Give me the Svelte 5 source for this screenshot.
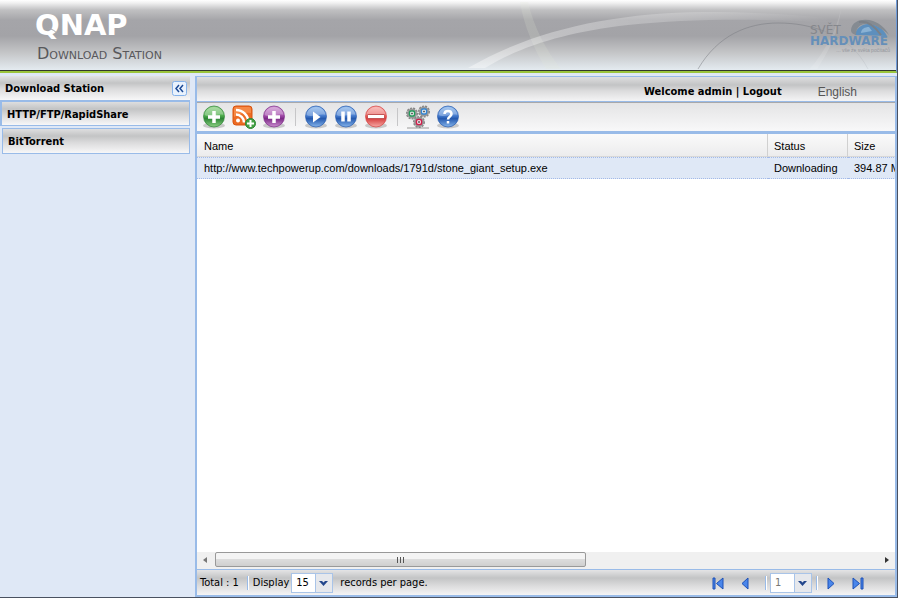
<script>
  let pageSize = $state('15');
  let page = $state('1');
  const groups = [
    { name: 'HTTP/FTP/RapidShare', active: true },
    { name: 'BitTorrent', active: false }
  ];
  const rows = [
    { name: 'http://www.techpowerup.com/downloads/1791d/stone_giant_setup.exe', status: 'Downloading', size: '394.87 MB' }
  ];
</script>

{#snippet ball(id, light, mid, dark)}
  <defs>
    <linearGradient id={id} x1="0" y1="0" x2="0" y2="1">
      <stop offset="0" stop-color={light} />
      <stop offset="0.45" stop-color={mid} />
      <stop offset="0.6" stop-color={dark} />
      <stop offset="1" stop-color={light} />
    </linearGradient>
  </defs>
  <ellipse cx="12" cy="20.500" rx="11" ry="3" fill="#777" opacity="0.35" />
  <circle cx="12" cy="11.500" r="10.500" fill="url(#{id})" stroke={dark} stroke-opacity="0.7" />
  <path d="M2.500 10C3 5 7 2 12 2S21 5 21.500 10C16 8 8 13 2.500 10Z" fill="#fff" opacity="0.3" />
{/snippet}

{#snippet chevron()}
  <svg class="chevron" width="17" height="18" viewBox="0 0 17 18" aria-hidden="true">
    <rect width="17" height="18" fill="#e6e8ec" />
    <path d="M.5 0V18" stroke="#a9c4e8" />
    <path d="M4 7H7L8.500 8.500L10 7H13L8.500 12Z" fill="#24478c" />
  </svg>
{/snippet}

<div class="app">
  <header>
    <svg class="swoosh" viewBox="0 0 448 70" preserveAspectRatio="xMaxYMid slice" aria-hidden="true">
      <defs>
        <linearGradient id="fade" x1="0" y1="0" x2="1" y2="0">
          <stop offset="0" stop-color="#fff" stop-opacity="0.4" />
          <stop offset="0.5" stop-color="#fff" stop-opacity="0.2" />
          <stop offset="0.85" stop-color="#fff" stop-opacity="0" />
        </linearGradient>
      </defs>
      <path d="M72 2C76 26 86 49 98 69H113C98 50 86 28 80 2Z" fill="#e4e8d8" opacity="0.18" />
      <path d="M20 68C85 30 165 13 255 12C320 12 370 16 448 26C330 18 250 18 180 25C120 32 75 45 37 68Z" fill="url(#fade)" />
      <path d="M250 69C270 35 300 23 330 23C348 23 362 26 376 31" fill="none" stroke="#777a80" stroke-width="1" opacity="0.5" />
      <path d="M376 31C396 38 410 50 420 69" fill="none" stroke="#777a80" stroke-width="1" opacity="0.12" />
      <path d="M393 9C388 32 376 52 362 69H369C382 50 391 30 393 9Z" fill="#fff" opacity="0.12" />
    </svg>
    <div class="brand">
      <div class="logo">QNAP
        <svg width="12" height="8" viewBox="0 0 12 8" aria-hidden="true"><path d="M1 1C5 2 8 4 11 7" fill="none" stroke="#a7a7ac" /></svg>
      </div>
      <div class="product">Download Station</div>
    </div>
    <svg class="partner" width="84" height="36" viewBox="0 0 84 36" role="img" aria-label="Svět Hardware">
      <path d="M46 17C47 10 53 6 59 6C67 6 74 10 78 18Z" fill="#5d8fbd" />
      <path d="M42 12C43 2 55 0 64 3C72 6 77 11 80 17C74 11 67 7 60 6C53 5 47 8 47 17C43 16 42 14 42 12Z" fill="#858b92" />
      <path d="M50 4C59 2 67 10 72 17" stroke="#7b8188" stroke-width="2" fill="none" />
      <path d="M52 15C52 11 56 9 60 9L63 13Z" fill="#8ab2d4" />
      <text x="1" y="16" class="svet">SVĚT</text>
      <text x="1" y="27" class="hardware">HARDWARE</text>
      <text x="81" y="34" text-anchor="end" class="motto">... vše ze světa počítačů</text>
    </svg>
  </header>

  <div class="body">
    <aside>
      <div class="side-title">
        <h1>Download Station</h1>
        <button class="collapse" aria-label="Collapse">
          <svg width="15" height="15" viewBox="0 0 15 15"><rect x=".5" y=".5" width="14" height="14" rx="2" fill="#e9f2fd" stroke="#86b3ea" /><path d="M7 4L4 7.500L7 11M11 4L8 7.500L11 11" fill="none" stroke="#1c4a96" stroke-width="1.500" /></svg>
        </button>
      </div>
      <nav>
        {#each groups as g}
          <button class="group" class:active={g.active}>{g.name}</button>
        {/each}
      </nav>
    </aside>

    <main>
      <div class="userbar">
        <span>Welcome admin | <a href="#logout">Logout</a></span>
        <button class="lang">English</button>
      </div>

      <div class="toolbar">
        <button aria-label="Add download">
          <svg width="24" height="24" viewBox="0 0 24 24">{@render ball('green', '#8ed184', '#4fae4d', '#2c8535')}<path d="M12 6V18M6 12H18" stroke="#fff" stroke-width="3.500" /></svg>
        </button>
        <button aria-label="Add RSS feed">
          <svg width="24" height="24" viewBox="0 0 24 24">
            <rect x="1" y="1" width="19" height="19" rx="3" fill="#ec6b24" stroke="#d9540f" />
            <path d="M2 4Q2 2 4 2H17Q19 2 19 4V8Q10 7 2 12Z" fill="#ffa868" opacity="0.5" />
            <circle cx="6" cy="15.500" r="2" fill="#fff" />
            <path d="M4 9.500A8 8 0 0 1 12 17.500M4 5A12.500 12.500 0 0 1 16.500 17.500" fill="none" stroke="#fff" stroke-width="2.500" />
            <circle cx="18.500" cy="18.500" r="5" fill="#45a145" stroke="#2c8535" />
            <path d="M18.500 15V22M15 18.500H22" stroke="#fff" stroke-width="2" />
          </svg>
        </button>
        <button aria-label="Add torrent">
          <svg width="24" height="24" viewBox="0 0 24 24">{@render ball('purple', '#cb8fd0', '#a34cab', '#7c2987')}<path d="M12 6V18M6 12H18" stroke="#fff" stroke-width="3.500" /></svg>
        </button>
        <i class="sep"></i>
        <button aria-label="Start">
          <svg width="24" height="24" viewBox="0 0 24 24">{@render ball('play', '#85b5ec', '#4a7fd0', '#2458ae')}<path d="M9 6.500L16.500 12L9 17.500Z" fill="#fff" /></svg>
        </button>
        <button aria-label="Pause">
          <svg width="24" height="24" viewBox="0 0 24 24">{@render ball('pause', '#85b5ec', '#4a7fd0', '#2458ae')}<path d="M9 6.500V16.500M15 6.500V16.500" stroke="#fff" stroke-width="3.500" /></svg>
        </button>
        <button aria-label="Remove">
          <svg width="24" height="24" viewBox="0 0 24 24">{@render ball('remove', '#f7aaa6', '#e8615d', '#d64040')}<path d="M3.500 11.500H20.500" stroke="#c25555" stroke-width="5" /><path d="M4 11.500H20" stroke="#fff" stroke-width="3" /></svg>
        </button>
        <i class="sep"></i>
        <button aria-label="Settings">
          <svg width="24" height="24" viewBox="0 0 24 24">
            <rect x="1" y="22" width="22" height="2" fill="#aaa" opacity="0.6" />
            {#each [[6, 8.5, '#239a5b'], [18, 6.5, '#3384d1'], [13, 17, '#cf1f4c']] as [x, y, c]}
              <circle cx={x} cy={y} r="5" fill="none" stroke="#858585" stroke-width="2" stroke-dasharray="2 1" />
              <circle cx={x} cy={y} r="5" fill="#989898" />
              <rect x={x - 2.5} y={y - 2.5} width="5" height="5" rx="1.500" fill="#fff" stroke={c} stroke-width="1.500" />
              <circle cx={x} cy={y} r="1" fill="#555" />
            {/each}
          </svg>
        </button>
        <button aria-label="Help">
          <svg width="24" height="24" viewBox="0 0 24 24">{@render ball('help', '#85b5ec', '#4a7fd0', '#2458ae')}<path d="M8.500 9C8.500 5 15.500 5 15.500 9C15.500 11.500 12 11.500 12 14.500M12 16V18.500" fill="none" stroke="#fff" stroke-width="2.500" /></svg>
        </button>
      </div>

      <div class="grid">
        <table>
          <colgroup><col class="c-name" /><col class="c-status" /><col class="c-size" /></colgroup>
          <thead>
            <tr><th>Name</th><th>Status</th><th>Size</th></tr>
          </thead>
          <tbody>
            {#each rows as r}
              <tr><td>{r.name}</td><td>{r.status}</td><td>{r.size}</td></tr>
            {/each}
          </tbody>
        </table>
      </div>

      <div class="hscroll">
        <button aria-label="Scroll left"><svg width="17" height="16" viewBox="0 0 17 16"><path d="M10 5V11L6 8Z" fill="#777" /></svg></button>
        <div class="track"><div class="thumb"><i></i><i></i><i></i></div></div>
        <button aria-label="Scroll right"><svg width="17" height="16" viewBox="0 0 17 16"><path d="M7 5V11L11 8Z" fill="#333" /></svg></button>
      </div>

      <footer>
        <span>Total : 1</span>
        <i class="split"></i>
        <label for="page-size">Display</label>
        <span class="combo">
          <select id="page-size" bind:value={pageSize}><option>15</option><option>30</option><option>50</option></select>
          {@render chevron()}
        </span>
        <span>records per page.</span>
        <div class="pager">
          <button aria-label="First page"><svg width="16" height="16" viewBox="0 0 16 16"><path d="M3 3H5V14H3ZM13 3V14L6.500 8.500Z" fill="#4a86ea" stroke="#1c51b8" /></svg></button>
          <button aria-label="Previous page"><svg width="16" height="16" viewBox="0 0 16 16"><path d="M11 3V14L5 8.500Z" fill="#4a86ea" stroke="#1c51b8" /></svg></button>
          <i class="split"></i>
          <span class="combo num">
            <select aria-label="Page" bind:value={page}><option>1</option></select>
            {@render chevron()}
          </span>
          <i class="split"></i>
          <button aria-label="Next page"><svg width="16" height="16" viewBox="0 0 16 16"><path d="M5 3V14L11 8.500Z" fill="#4a86ea" stroke="#1c51b8" /></svg></button>
          <button aria-label="Last page"><svg width="16" height="16" viewBox="0 0 16 16"><path d="M11 3H13V14H11ZM3 3V14L9.500 8.500Z" fill="#4a86ea" stroke="#1c51b8" /></svg></button>
        </div>
      </footer>
    </main>
  </div>
</div>

<style>
  :global(body) { margin: 0; }
  * { box-sizing: border-box; }
  .app {
    display: flex;
    flex-direction: column;
    min-height: 100vh;
    background: #dfe8f6;
    border-right: 1px solid #4a5160;
    border-bottom: 1px solid #4a5160;
    font: 11px/14px "DejaVu Sans Condensed", "Noto Sans", sans-serif;
    color: #000;
  }
  button {
    margin: 0;
    padding: 0;
    border: 0;
    background: none;
    font: inherit;
    color: inherit;
  }
  button svg { display: block; }

  header {
    position: relative;
    display: flex;
    justify-content: space-between;
    height: 73px;
    border-right: 1px solid #6f9bd8;
    border-bottom: 2px solid #9bc53c;
    box-shadow: inset 0 -1px #33382c;
    background: linear-gradient(#fff 0, #f0f0f0 3px, #c0c0c2 10px, #a5a5a9 20px, #a3a3a7 36px, #c3c4c6 52px, #e4ebf0 70px);
  }
  .swoosh {
    position: absolute;
    right: 0;
    top: 0;
    width: 448px;
    height: 70px;
  }
  .brand { padding: 10px 0 0 35px; }
  .logo {
    position: relative;
    font: bold 29px/30px "DejaVu Sans", sans-serif;
    color: #fff;
  }
  .logo svg {
    position: absolute;
    left: 12px;
    top: 17px;
  }
  .product {
    margin-top: 5px;
    padding-left: 2px;
    font: 16px/18px "DejaVu Sans", sans-serif;
    font-variant: small-caps;
    color: #58585c;
  }
  .partner {
    position: relative;
    margin: 18px 3px 0 0;
  }
  .svet { font: 12px "DejaVu Sans", sans-serif; fill: #85878c; }
  .hardware { font: bold 12px "DejaVu Sans", sans-serif; fill: #658fb9; }
  .motto { font: 5px "Liberation Sans", sans-serif; fill: #96989e; }

  .body {
    flex: 1;
    display: flex;
    gap: 5px;
    padding-top: 3px;
  }
  aside { width: 190px; }
  .side-title {
    display: flex;
    align-items: center;
    justify-content: space-between;
    height: 24px;
    padding: 0 3px 0 5px;
    background: linear-gradient(#e2e3e4, #c3c4c5 7px, #dcdcdd 13px, #f7f7f8);
  }
  h1 { margin: 0; padding-top: 1px; font: inherit; font-weight: bold; }
  nav { display: flex; flex-direction: column; gap: 2px; }
  .group {
    height: 26px;
    margin-left: 2px;
    padding: 2px 0 0 5px;
    border: 1px solid #99bbe8;
    background: linear-gradient(#dededf, #c3c4c5 7px, #dcdcdd 14px, #f7f7f8);
    text-align: left;
    font-weight: bold;
  }
  .group.active {
    margin-left: 0;
    border-width: 2px 1px 1px 2px;
  }

  main {
    flex: 1;
    min-width: 0;
    display: flex;
    flex-direction: column;
    border: 1px solid #99bbe8;
    border-width: 1px 2px 2px;
  }
  .userbar {
    display: flex;
    justify-content: flex-end;
    align-items: center;
    gap: 36px;
    height: 25px;
    padding: 6px 38px 0 0;
    border-bottom: 1px solid #99bbe8;
    background: linear-gradient(#dededf, #c3c4c5 8px, #dcdcdd 14px, #f4f4f5);
    font-weight: bold;
  }
  .userbar a { color: inherit; text-decoration: none; }
  .lang {
    font: 12px/14px "Liberation Sans", sans-serif;
    color: #555;
  }
  .toolbar {
    display: flex;
    align-items: center;
    gap: 6px;
    height: 32px;
    padding: 0 5px;
    border-top: 1px solid #a8a8aa;
    border-bottom: 3px solid #99bbe8;
    background: linear-gradient(#e4e4e5, #f8f8f9);
  }
  .sep {
    width: 1px;
    height: 18px;
    margin: 0 2px 0 3px;
    background: #c6c6c8;
  }
  .grid {
    flex: 1;
    overflow: hidden;
    background: #fff;
    font: 11px/14px "Liberation Sans", Arial, sans-serif;
  }
  table {
    width: 751px;
    table-layout: fixed;
    border-collapse: separate;
    border-spacing: 0;
  }
  .c-name { width: 571px; }
  .c-status { width: 80px; }
  .c-size { width: 100px; }
  th {
    height: 23px;
    padding: 2px 6px 0;
    border-right: 1px solid #d0d0d0;
    border-bottom: 1px solid #d8d8d8;
    background: linear-gradient(#fafafa, #ececed);
    text-align: left;
    font-weight: normal;
  }
  td {
    height: 22px;
    padding: 0 6px;
    border: 0 dotted #a3bae9;
    border-width: 1px 0;
    background: #dfe8f6;
    white-space: nowrap;
  }
  th:first-child, td:first-child { padding-left: 7px; }
  .hscroll {
    display: flex;
    height: 17px;
    padding-bottom: 1px;
    background: #f0f0f0;
  }
  .track { flex: 1; padding-left: 1px; }
  .thumb {
    display: flex;
    align-items: center;
    justify-content: center;
    gap: 2px;
    width: 56%;
    height: 15px;
    border: 1px solid #999;
    border-radius: 2px;
    background: linear-gradient(#f4f4f4 50%, #dcdcdc 50%, #cfcfcf);
  }
  .thumb i { width: 1px; height: 6px; background: #555; }

  footer {
    display: flex;
    align-items: center;
    height: 26px;
    padding: 0 29px 0 3px;
    border-top: 1px solid #99bbe8;
    background: linear-gradient(#e4e4e5, #c3c4c5 8px, #dcdcdd 16px, #f4f4f5);
  }
  .split {
    width: 2px;
    height: 14px;
    margin: 0 4px 0 8px;
    background: linear-gradient(90deg, #99bbe8 50%, #fff 50%);
  }
  .combo {
    position: relative;
    width: 42px;
    height: 20px;
    margin: 0 7px 0 2px;
  }
  select {
    width: 100%;
    height: 100%;
    padding: 0 4px;
    border: 1px solid #a9c4e8;
    border-radius: 0;
    appearance: none;
    background: #fff;
    font: 11px/18px "DejaVu Sans Condensed", "Noto Sans", sans-serif;
    color: #000;
  }
  .num select { color: #777; }
  .chevron {
    position: absolute;
    right: 1px;
    top: 1px;
    pointer-events: none;
  }
  .pager {
    display: flex;
    align-items: center;
    margin-left: auto;
  }
  .pager button { margin-left: 11px; }
  .pager .split { margin: 0 0 0 12px; }
  .pager .combo { margin: 0 2px 0 3px; }
  .pager .combo + .split { margin-left: 2px; }
  .pager .split + button { margin-left: 5px; }
</style>
